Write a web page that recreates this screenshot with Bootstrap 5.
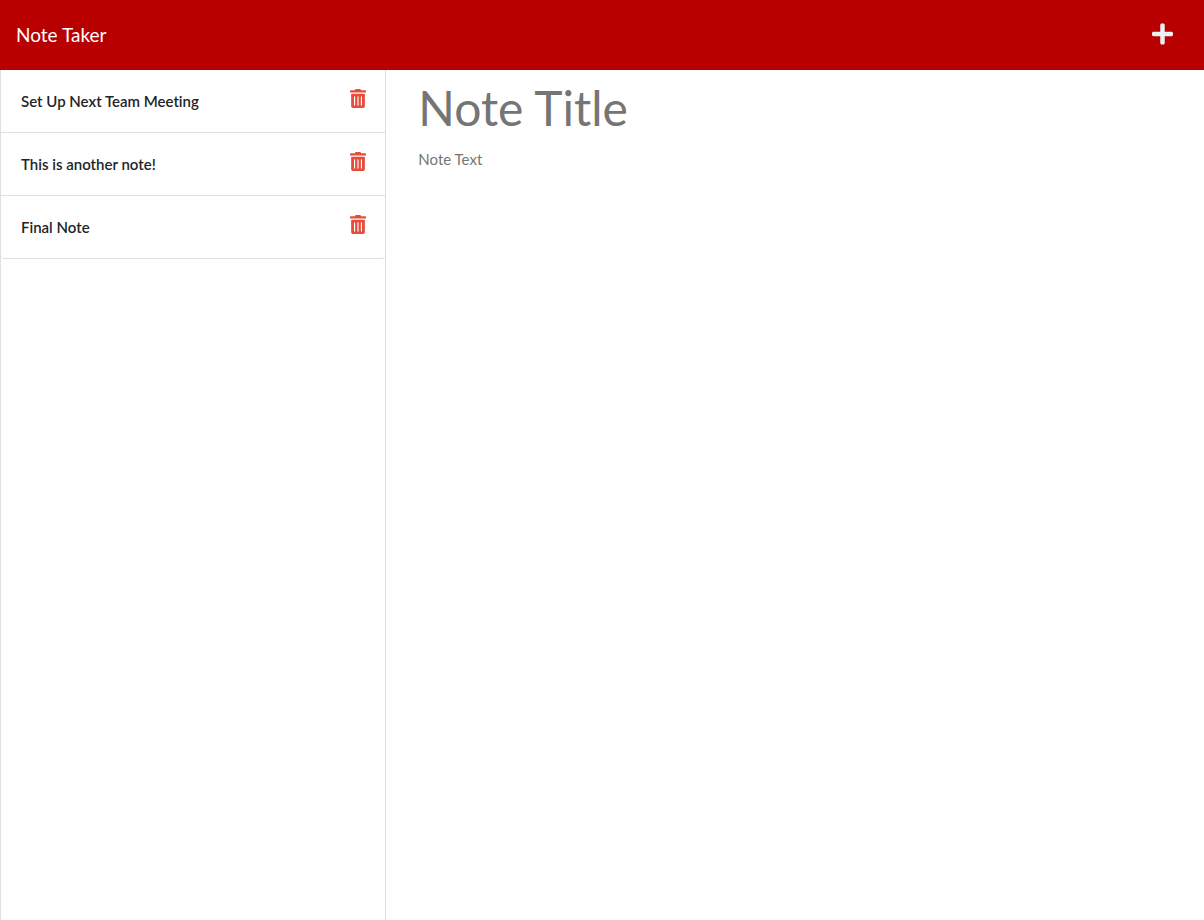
<!DOCTYPE html>
<html lang="en">
<head>
<meta charset="utf-8">
<meta name="viewport" content="width=device-width, initial-scale=1">
<title>Note Taker</title>
<link rel="stylesheet" href="https://cdn.jsdelivr.net/npm/bootstrap@5.3.0/dist/css/bootstrap.min.css">
<style>
  body { font-family: Lato, sans-serif; font-size: 15px; line-height: 22px; color: #212529; font-variant-ligatures: none; }
  .top-bar { background: #b80000; height: 70px; padding: 0 16px; }
  .top-bar .navbar-brand { font-size: 19px; line-height: 28px; color: #fff; }
  .new-note { color: #ecf0f1; padding: 0 15px 3px; line-height: 1; }
  .new-note svg { width: 21px; height: 24px; }
  .list-column { padding-right: 15px; }
  .note-list { border: solid rgba(0, 0, 0, .125); border-width: 0 1px; }
  .note-list .list-group .list-group-item { height: 63px; padding: 0 19px 0 20px; border-width: 0 0 1px; border-color: rgba(0, 0, 0, .125); color: #212529; }
  .note-list .list-group .list-group-item:last-child { border-radius: 0 0 4px 4px; }
  .note-name { font-weight: 600; }
  .delete-note { color: #e74c3c; padding: 0 0 6px; line-height: 1; }
  .delete-note svg { width: 16px; height: 19px; }
  .editor { padding: 11px 15px 0 16px; }
  .editor input, .editor textarea { display: block; width: 100%; border: 0; outline: 0; padding: 0 1px; background: transparent; color: #212529; font-variant-ligatures: none; }
  .editor ::placeholder { color: #757575; opacity: 1; }
  .note-title { font-size: 48px; line-height: 54px; height: 54px; }
  .note-body { margin-top: 13px; min-height: 60vh; line-height: 22px; resize: none; }
</style>
</head>
<body class="d-flex flex-column min-vh-100">
<svg class="d-none" aria-hidden="true">
  <symbol id="trash" viewBox="0 0 448 512" preserveAspectRatio="none"><path fill="currentColor" d="M32 464a48 48 0 0 0 48 48h288a48 48 0 0 0 48-48V128H32zm272-256a16 16 0 0 1 32 0v224a16 16 0 0 1-32 0zm-96 0a16 16 0 0 1 32 0v224a16 16 0 0 1-32 0zm-96 0a16 16 0 0 1 32 0v224a16 16 0 0 1-32 0zM432 32H312l-9.4-18.7A24 24 0 0 0 281.1 0H166.8a23.72 23.72 0 0 0-21.4 13.3L136 32H16A16 16 0 0 0 0 48v32a16 16 0 0 0 16 16h416a16 16 0 0 0 16-16V48a16 16 0 0 0-16-16z"/></symbol>
  <symbol id="plus" viewBox="0 0 448 512"><path fill="currentColor" d="M416 208H272V64c0-17.67-14.33-32-32-32h-32c-17.67 0-32 14.33-32 32v144H32c-17.67 0-32 14.33-32 32v32c0 17.67 14.33 32 32 32h144v144c0 17.67 14.33 32 32 32h32c17.67 0 32-14.33 32-32V304h144c17.67 0 32-14.33 32-32v-32c0-17.67-14.33-32-32-32z"/></symbol>
</svg>
<nav class="navbar top-bar">
  <a class="navbar-brand m-0 p-0" href="#">Note Taker</a>
  <button class="btn border-0 new-note" type="button" aria-label="New note"><svg aria-hidden="true"><use href="#plus"/></svg></button>
</nav>
<main class="row g-0 flex-grow-1">
  <div class="col-4 d-flex list-column">
    <div class="note-list flex-grow-1">
      <ul class="list-group list-group-flush">
        <li class="list-group-item d-flex align-items-center justify-content-between">
          <span class="note-name">Set Up Next Team Meeting</span>
          <button class="btn border-0 delete-note" type="button" aria-label="Delete Set Up Next Team Meeting"><svg aria-hidden="true"><use href="#trash"/></svg></button>
        </li>
        <li class="list-group-item d-flex align-items-center justify-content-between">
          <span class="note-name">This is another note!</span>
          <button class="btn border-0 delete-note" type="button" aria-label="Delete This is another note!"><svg aria-hidden="true"><use href="#trash"/></svg></button>
        </li>
        <li class="list-group-item d-flex align-items-center justify-content-between">
          <span class="note-name">Final Note</span>
          <button class="btn border-0 delete-note" type="button" aria-label="Delete Final Note"><svg aria-hidden="true"><use href="#trash"/></svg></button>
        </li>
      </ul>
    </div>
  </div>
  <div class="col-8 editor">
    <input class="note-title" type="text" placeholder="Note Title" aria-label="Note title">
    <textarea class="note-body" placeholder="Note Text" aria-label="Note text"></textarea>
  </div>
</main>
<script src="https://cdn.jsdelivr.net/npm/bootstrap@5.3.0/dist/js/bootstrap.bundle.min.js"></script>
</body>
</html>
